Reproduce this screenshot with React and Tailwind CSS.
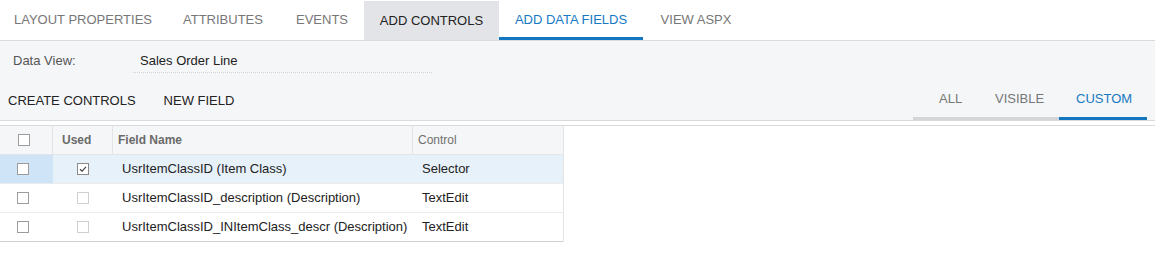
import React from 'react';

const topTabs = [
  { text: 'LAYOUT PROPERTIES', w: 'w-[166px]' },
  { text: 'ATTRIBUTES', w: 'w-[114px]' },
  { text: 'EVENTS', w: 'w-[84px]' },
  { text: 'ADD CONTROLS', w: 'w-[135px]', pressed: true },
  { text: 'ADD DATA FIELDS', w: 'w-[144px]', active: true },
  { text: 'VIEW ASPX', w: 'w-[106px]' },
];

const rows = [
  { name: 'UsrItemClassID (Item Class)', control: 'Selector', used: true, selected: true },
  { name: 'UsrItemClassID_description (Description)', control: 'TextEdit' },
  { name: 'UsrItemClassID_INItemClass_descr (Description)', control: 'TextEdit' },
];

const Box = ({ light, checked }) => (
  <span
    className={`relative inline-block w-[12px] h-[12px] border bg-white ${
      light ? 'border-[#d0d0d0]' : checked ? 'border-[#8a8a8a]' : 'border-[#9c9c9c]'
    }`}
  >
    {checked && (
      <svg viewBox="0 0 12 12" className="absolute -left-px -top-px w-[12px] h-[12px]">
        <path d="M3 6.2 L5.1 8.2 L9 3.8" fill="none" stroke="#444" strokeWidth="1.2" />
      </svg>
    )}
  </span>
);

export default function App() {
  return (
    <div className="w-[1155px] h-[278px] bg-white text-[13px] font-['Liberation_Sans',Arial,sans-serif]">
      {/* Top tabs */}
      <div className="flex h-[41px] border-b border-[#d9dadc] bg-white">
        {topTabs.map((t) => (
          <div
            key={t.text}
            className={`${t.w} flex items-center justify-center text-[13px] ${
              t.pressed
                ? 'bg-[#e2e4e7] text-[#222] mt-px'
                : t.active
                ? 'text-[#1779c3] border-b-[3px] border-[#1376c0] pt-[3px]'
                : 'text-[#777]'
            }`}
          >
            {t.text}
          </div>
        ))}
      </div>

      {/* Gray form section */}
      <div className="bg-[#f5f6f8] h-[80px] border-b border-[#d9dadc] flex flex-col">
        <div className="flex items-center h-[40px]">
          <span className="pl-[13px] w-[140px] text-[#555]">Data View:</span>
          <div className="w-[299px] -ml-[7px] pl-[7px] border-b border-dotted border-[#cfd1d4] h-[24px] flex items-center text-[#222]">
            Sales Order Line
          </div>
        </div>
        <div className="flex items-end justify-between flex-1">
          <div className="flex items-center h-[38px] text-[#222] pb-[1px]">
            <span className="pl-[8px]">CREATE CONTROLS</span>
            <span className="pl-[28px]">NEW FIELD</span>
          </div>
          <div className="flex mr-[8px] h-[39px]">
            <div className="w-[70px] flex items-center pl-[26px] text-[#777] border-b-[3px] border-[#d3d5d8]">ALL</div>
            <div className="w-[76px] flex items-center pl-[12px] text-[#777] border-b-[3px] border-[#d3d5d8]">VISIBLE</div>
            <div className="w-[88px] flex items-center pl-[17px] text-[#1779c3] border-b-[3px] border-[#1376c0]">CUSTOM</div>
          </div>
        </div>
      </div>

      {/* Grid */}
      <div className="mt-[4px] border-t border-[#d9dadc]">
        <div className="w-[564px] border-r border-[#e3e4e6]">
          <div className="flex h-[29px] bg-[#f5f6f8] border-b border-[#e3e4e6] text-[12px] text-[#6b6b6b]">
            <div className="w-[53px] flex items-center pl-[18px] border-r border-[#e3e4e6]">
              <Box />
            </div>
            <div className="w-[60px] flex items-center pl-[9px] border-r border-[#e3e4e6] font-bold">Used</div>
            <div className="w-[300px] flex items-center pl-[5px] border-r border-[#e3e4e6] font-bold">Field Name</div>
            <div className="flex-1 flex items-center pl-[5px] text-[#707070]">Control</div>
          </div>
          {rows.map((r, i) => (
            <div
              key={r.name}
              className={`flex h-[29px] text-[#222] border-b ${
                i === rows.length - 1 ? 'border-[#cfd0d2]' : 'border-[#eaebed]'
              } ${r.selected ? 'bg-[#e6f1fa]' : 'bg-white'}`}
            >
              <div className={`w-[53px] flex items-center pl-[17px] ${r.selected ? 'bg-[#cfe4f6]' : ''}`}>
                <Box />
              </div>
              <div className="w-[60px] flex items-center justify-center">
                <Box light={!r.used} checked={r.used} />
              </div>
              <div className="w-[300px] flex items-center pl-[9px]">{r.name}</div>
              <div className="flex-1 flex items-center pl-[9px]">{r.control}</div>
            </div>
          ))}
        </div>
      </div>
    </div>
  );
}
